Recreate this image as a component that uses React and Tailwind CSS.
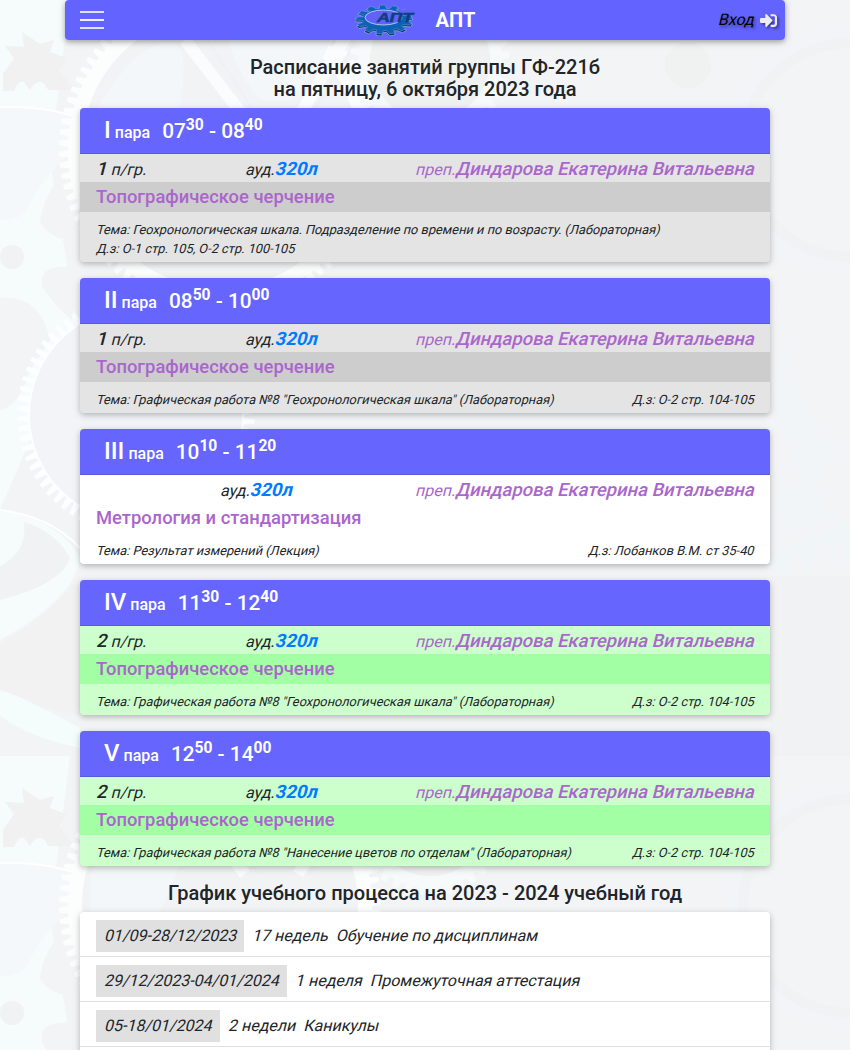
import React from "react";

const lessons = [
  { num: "I", s: ["07", "30"], e: ["08", "40"], group: "1", tone: "gray", subject: "Топографическое черчение", topic: "Геохронологическая шкала. Подразделение по времени и по возрасту. (Лабораторная)", hw: "О-1 стр. 105, О-2 стр. 100-105" },
  { num: "II", s: ["08", "50"], e: ["10", "00"], group: "1", tone: "gray", subject: "Топографическое черчение", topic: 'Графическая работа №8 "Геохронологическая шкала" (Лабораторная)', hw: "О-2 стр. 104-105" },
  { num: "III", s: ["10", "10"], e: ["11", "20"], group: "", tone: "white", subject: "Метрология и стандартизация", topic: "Результат измерений (Лекция)", hw: "Лобанков В.М. ст 35-40" },
  { num: "IV", s: ["11", "30"], e: ["12", "40"], group: "2", tone: "green", subject: "Топографическое черчение", topic: 'Графическая работа №8 "Геохронологическая шкала" (Лабораторная)', hw: "О-2 стр. 104-105" },
  { num: "V", s: ["12", "50"], e: ["14", "00"], group: "2", tone: "green", subject: "Топографическое черчение", topic: 'Графическая работа №8 "Нанесение цветов по отделам" (Лабораторная)', hw: "О-2 стр. 104-105" },
];

const periods = [
  ["01/09-28/12/2023", "17 недель", "Обучение по дисциплинам"],
  ["29/12/2023-04/01/2024", "1 неделя", "Промежуточная аттестация"],
  ["05-18/01/2024", "2 недели", "Каникулы"],
];

const tones = {
  gray: ["bg-[#e4e4e4]", "bg-[#cdcdcd]"],
  white: ["bg-white", "bg-white"],
  green: ["bg-[#ccffcc]", "bg-[#a3ffa3]"],
};

function gear(cx, cy, r, n, h) {
  const pts = [];
  for (let i = 0; i < n; i++) {
    [[0, r], [0.3, r], [0.42, r + h], [0.82, r + h]].forEach(([o, q]) => {
      const a = ((i + o) / n) * Math.PI * 2;
      pts.push(`${(cx + q * Math.cos(a)).toFixed(1)},${(cy + q * Math.sin(a)).toFixed(1)}`);
    });
  }
  return pts.join(" ");
}

function GearField() {
  return (
    <svg className="absolute inset-0 h-[1050px] w-full" viewBox="0 0 850 1050" preserveAspectRatio="xMinYMin slice">
      <defs>
        <pattern id="gears" width="850" height="756" patternUnits="userSpaceOnUse">
          <rect width="850" height="756" fill="#f2f4f6" />
          <path d="M0 0H70L50 160L78 330L0 510Z" fill="#f6fbfc" />
          <path d="M3 74L14 58L5 46L24 47L22 32L40 44L54 40L50 52L66 58L60 70Q66 82 76 90H48Q44 80 38 82Q33 84 30 90L24 82Q18 80 14 91H3Z" fill="#f1f1f1" />
          <path d="M0 108Q45 107 78 116L64 160Q40 180 26 212Q12 222 0 220Z" fill="#f4f8fb" />
          <path d="M0 107Q40 105 80 118" fill="none" stroke="#fff" strokeWidth="2" />
          <path d="M80 160Q45 185 40 222Q50 240 80 242ZM80 268Q38 262 42 286Q50 300 72 320ZM0 298Q40 294 50 340L30 370Q20 405 0 410Z" fill="#f2f4f6" />
          <ellipse cx="12" cy="257" rx="12" ry="12" fill="#f1f2f4" />
          <polygon points={gear(220, 150, 152, 90, 9)} fill="#fcfefe" />
          <circle cx="220" cy="150" r="138" fill="#f2f3f4" />
          <path d="M90 120Q135 40 172 42Q190 46 180 108L150 180H90ZM230 0Q290 -8 335 4Q340 50 290 100H260Q225 60 226 10Z" fill="#f4f7f9" />
          <path d="M185 40L245 118M350 30L298 118" stroke="#fafcfd" strokeWidth="12" />
          <path d="M200 28L258 118M362 30L310 118" stroke="#eef2f6" strokeWidth="2" />
          <polygon points={gear(136, 415, 108, 72, 11)} fill="#fcffff" />
          <circle cx="136" cy="415" r="106" fill="#f2f4f8" />
          <path d="M0 510Q60 520 80 558Q74 600 0 640Z" fill="#f6fcfc" />
          <path d="M24 522Q56 532 70 558Q62 584 0 600V566Q28 552 24 522Z" fill="#f1f2f3" />
          <path d="M0 510Q50 516 80 548" fill="none" stroke="#fff" strokeWidth="2" />
          <path d="M0 645Q70 600 80 572V715Q20 705 0 690Z" fill="#f2f2f3" />
          <path d="M0 690Q20 695 80 728V748Q30 738 0 716Z" fill="#f5fcfc" />
          <polygon points={gear(430, 60, 72, 36, 8)} fill="#f6fafb" />
          <circle cx="430" cy="60" r="60" fill="#f0f1f1" />
          <polygon points={gear(850, 150, 118, 76, 6)} fill="#f2f5f8" />
          <circle cx="850" cy="150" r="112" fill="#f1f2f3" />
          <circle cx="850" cy="150" r="102" fill="#f2f4f6" />
          <circle cx="688" cy="65" r="23" fill="#f0f1f1" />
          <path d="M770 390Q795 350 780 300L800 400L850 470V440L810 480L840 520L770 540V500L800 480Z" fill="#f1f5f8" />
          <path d="M770 556L850 520V560L836 545V568L822 545L806 570L796 550L786 572L770 575Z" fill="#f0f5f8" />
          <rect x="770" y="576" width="80" height="180" fill="#f1f2f4" />
        </pattern>
      </defs>
      <rect width="850" height="1050" fill="url(#gears)" />
    </svg>
  );
}

function Logo() {
  return (
    <svg className="h-[32px] w-[60px]" viewBox="0 0 60 32">
      <g transform="translate(29 15.500) scale(1 .52)">
        <polygon points={gear(0, 3, 22, 13, 7)} fill="#0a3a74" stroke="#8fb4dc" strokeWidth=".9" />
        <polygon points={gear(0, 0, 21.5, 13, 6.5)} fill="#0e62b6" stroke="#7aa8dc" strokeWidth=".6" />
      </g>
      <ellipse cx="28.500" cy="13.500" rx="18.500" ry="7.500" fill="#6262fa" stroke="#b4d0ee" strokeWidth=".9" />
      <path d="M44 6H60V12H46Z" fill="#6262fa" />
      <text x="22" y="18" fontSize="12.500" fontWeight="700" fontStyle="italic" fontFamily="Liberation Sans, sans-serif" fill="#0c3f80" stroke="#0c3f80" strokeWidth=".5" textLength="36" lengthAdjust="spacingAndGlyphs">АПТ</text>
    </svg>
  );
}

function Slant({ children, className = "" }) {
  return <div className={`-skew-x-[14deg] ${className}`}>{children}</div>;
}

function Lesson({ l }) {
  const [bg, band] = tones[l.tone];
  const two = l.num === "I";
  return (
    <section className={`overflow-hidden rounded-[4px] shadow-[0_2px_5px_rgba(0,0,0,0.16),0_2px_10px_rgba(0,0,0,0.12)] ${bg}`}>
      <header className="flex h-[46px] items-baseline border-b border-[#5959df] bg-[#6666ff] pl-6 font-medium leading-[44px] text-white">
        <span className="text-[24px]">{l.num}</span>
        <span className="ml-1 text-base">пара</span>
        <span className="ml-3 whitespace-pre text-[20.8px]">
          {l.s[0]}<sup className="top-[-8px] text-[15.6px] font-bold leading-none">{l.s[1]}</sup> - {l.e[0]}<sup className="top-[-8px] text-[15.6px] font-bold leading-none">{l.e[1]}</sup>
        </span>
      </header>
      <div className="flex h-7 items-center justify-between px-4 pt-[2px] leading-7">
        <Slant className="origin-[0_20px]"><span className="text-[18.4px] font-medium">{l.group}</span>{l.group && " п/гр."}</Slant>
        <Slant className="origin-[0_20px]">ауд.<span className="text-[18.4px] font-bold text-[#007bff]">320л</span></Slant>
        <Slant className="origin-[0_20px] text-[#aa66cc]">преп.<span className="text-[18.4px] font-medium">Диндарова Екатерина Витальевна</span></Slant>
      </div>
      <h6 className={`h-[30px] px-4 text-[18.4px] font-medium leading-[30px] text-[#aa66cc] ${band}`}>{l.subject}</h6>
      <div className={`flex px-4 pb-1 pt-2 text-[12.8px] leading-[19px] ${two ? "flex-col" : "justify-between"}`}>
        <Slant className="origin-[0_14px]">Тема: {l.topic}</Slant>
        <Slant className="origin-[0_14px]">Д.з: {l.hw}</Slant>
      </div>
    </section>
  );
}

export default function App() {
  return (
    <div className="relative h-[1050px] overflow-hidden bg-[#f3f5f7] font-['Roboto',sans-serif] text-base text-[#212529]">
      <GearField />
      <div className="relative mx-auto w-[720px]">
        <nav className="grid h-10 grid-cols-3 items-center rounded-[4px] bg-[#5e5eff]/97 shadow-[0_2px_5px_rgba(0,0,0,0.26),0_2px_10px_rgba(0,0,0,0.12)]">
          <div className="ml-[15px] flex w-6 flex-col gap-[6px]">
            <i className="h-[2px] bg-white/80" /><i className="h-[2px] bg-white/90" /><i className="h-[2px] bg-white/80" />
          </div>
          <div className="flex items-center justify-center gap-[21px] pr-5">
            <Logo />
            <span className="text-xl font-bold leading-[38px] text-white">АПТ</span>
          </div>
          <div className="flex items-center justify-end gap-[7px] pr-2 text-black [text-shadow:2px_2px_3px_rgba(0,0,0,0.4)]">
            <Slant className="origin-[0_20px]">Вход</Slant>
            <svg className="h-[17px] w-[17px] drop-shadow-[2px_2px_1px_rgba(0,0,0,0.4)]" viewBox="0 0 512 512" fill="#eee">
              <path d="M416 448h-84c-6.600 0-12-5.400-12-12v-40c0-6.600 5.400-12 12-12h84c17.700 0 32-14.300 32-32V160c0-17.700-14.300-32-32-32h-84c-6.600 0-12-5.400-12-12V76c0-6.600 5.400-12 12-12h84c53 0 96 43 96 96v192c0 53-43 96-96 96zm-47-209L201 71c-15-15-41-4.500-41 17v96H24c-13.300 0-24 10.700-24 24v96c0 13.300 10.700 24 24 24h136v96c0 21.500 26 32 41 17l168-168c9.300-9.400 9.300-24.600 0-34z" />
            </svg>
          </div>
        </nav>
        <main className="px-[15px]">
          <h5 className="pb-2 pt-4 text-center text-xl font-medium leading-[22px]">
            Расписание занятий группы ГФ-221б<br />на пятницу, 6 октября 2023 года
          </h5>
          <div className="flex flex-col gap-4">{lessons.map((l) => <Lesson key={l.num} l={l} />)}</div>
          <h5 className="h-[46px] pt-4 text-center text-xl font-medium leading-[22px]">График учебного процесса на 2023 - 2024 учебный год</h5>
          <ul className="h-40 rounded-[4px] bg-white shadow-[0_2px_5px_rgba(0,0,0,0.16),0_2px_10px_rgba(0,0,0,0.12)]">
            {periods.map((p) => (
              <li key={p[0]} className="flex h-[45px] items-center whitespace-pre border-b border-[#dee2e6] px-4 pt-[3px]">
                <div className="mr-2 bg-[#e0e0e0] px-2 leading-8"><Slant className="origin-[0_21px]">{p[0]}</Slant></div>
                <Slant className="origin-[0_17px]">{p[1]}  {p[2]}</Slant>
              </li>
            ))}
          </ul>
        </main>
      </div>
    </div>
  );
}
